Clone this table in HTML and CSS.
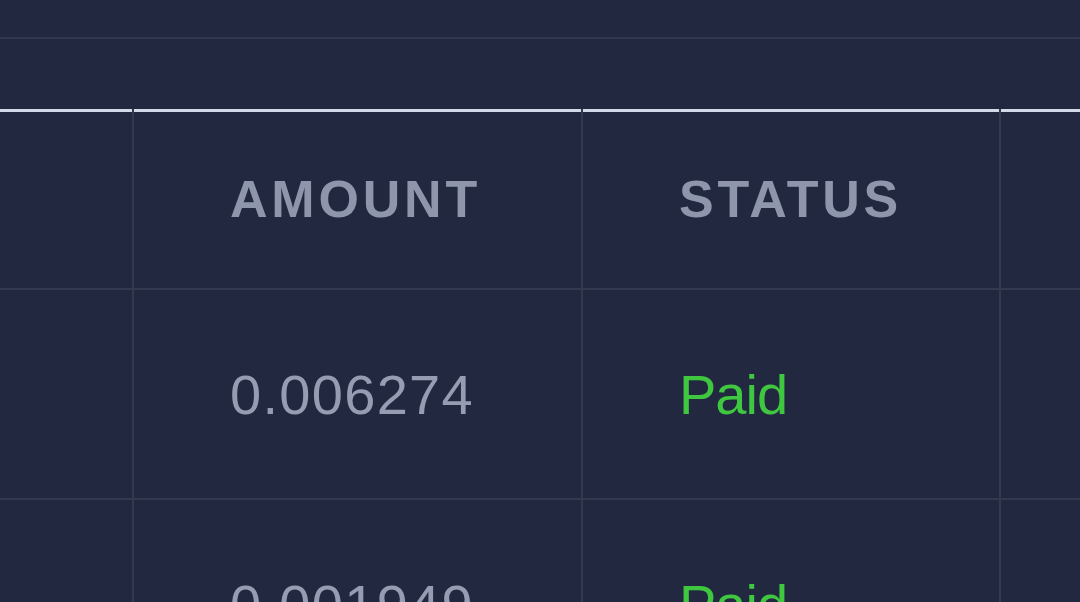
FILE: index.html
```html
<!DOCTYPE html>
<html lang="en">
  <head>
    <meta charset="UTF-8" />
    <meta name="viewport" content="width=device-width, initial-scale=1.0" />
    <title>Payouts</title>
    <link rel="stylesheet" href="styles.css">
  </head>
  <body>
    <div class="toolbar"></div>
    <div class="spacer"></div>
    <div class="table">
      <div class="cell head"></div>
      <div class="cell head"><span class="label">AMOUNT</span></div>
      <div class="cell head"><span class="label">STATUS</span></div>
      <div class="cell head"></div>

      <div class="cell"></div>
      <div class="cell"><span class="amount">0.006274</span></div>
      <div class="cell"><span class="status paid">Paid</span></div>
      <div class="cell"></div>

      <div class="cell"></div>
      <div class="cell"><span class="amount">0.001949</span></div>
      <div class="cell"><span class="status paid">Paid</span></div>
      <div class="cell"></div>
    </div>
  </body>
</html>
```

FILE: styles.css
```css
html,
body {
  margin: 0;
  height: 100%;
  overflow: hidden;
}
body {
  background-color: #212840;
  color: #959db1;
  font-family: "Liberation Sans", Arial, Helvetica, sans-serif;
}
.toolbar {
  height: 37px;
  border-bottom: 2px solid #2f3751;
}
.spacer {
  height: 70px;
}
.table {
  display: grid;
  grid-template-columns: 132px 447px 416px 1fr;
  grid-template-rows: 179px;
  grid-auto-rows: 208px;
  gap: 2px;
  background-color: #333a50;
}
.cell {
  background-color: #212840;
  display: flex;
  align-items: center;
  padding-left: 96px;
}
.head {
  border-top: 3px solid #d2daea;
}
.label {
  font-size: 52px;
  font-weight: bold;
  letter-spacing: 3.8px;
  color: #8e96ab;
  margin-top: -2px;
}
.amount {
  font-size: 56px;
  letter-spacing: 1.3px;
  color: #959db2;
}
.status {
  font-size: 56px;
  letter-spacing: -1px;
}
.paid {
  color: #3fc73f;
}
```
